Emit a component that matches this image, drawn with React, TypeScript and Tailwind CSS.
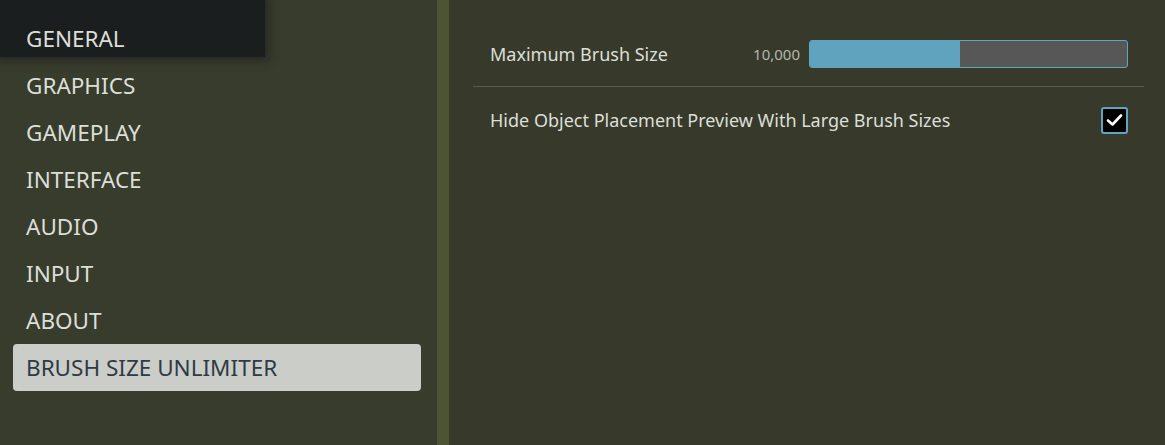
import React from "react";

const items = ["GENERAL", "GRAPHICS", "GAMEPLAY", "INTERFACE", "AUDIO", "INPUT", "ABOUT", "BRUSH SIZE UNLIMITER"];

export default function App() {
  return (
    <div
      className="relative flex h-[445px] w-[1165px] overflow-hidden bg-[#383c2c]"
      style={{ fontFamily: '"Noto Sans", "Liberation Sans", sans-serif' }}
    >
      <div className="pointer-events-none absolute left-0 top-0 h-[57px] w-[265px] bg-[#1b1e1f] shadow-[0_0_8px_4px_rgba(27,30,31,0.6)]" />
      <div className="relative flex w-[437px] flex-col pt-[15px]">
        {items.map((it, i) => {
          const sel = i === items.length - 1;
          return (
            <div
              key={it}
              className={
                "ml-[13px] mr-[16px] flex h-[47px] items-center rounded-[4px] pl-[13px] text-[22.5px] " +
                (sel ? "bg-[#cbcdc8] text-[#2f3a44]" : "text-[#dcdfd8]")
              }
            >
              {it}
            </div>
          );
        })}
      </div>
      <div className="w-[12px] bg-[#4b5433]" />
      <div className="flex flex-1 flex-col bg-[#373a2b] pl-[24px] pr-[21px] pt-[24px]">
        <div className="flex h-[63px] items-center border-b border-[#595d4a] pb-[2px] pl-[17px] pr-[16px]">
          <span className="flex-1 text-[18px] text-[#dcdfd8]">Maximum Brush Size</span>
          <span className="mr-[9px] text-[15px] text-[#b3b6ab]">10,000</span>
          <div className="flex h-[28px] w-[319px] overflow-hidden rounded-[3px] border border-[#5fa5c0] bg-[#575757]">
            <div className="h-full w-[150px] bg-[#5fa3be]" />
          </div>
        </div>
        <div className="flex h-[66px] items-center pl-[17px] pr-[16px]">
          <span className="flex-1 text-[18px] text-[#dcdfd8]">Hide Object Placement Preview With Large Brush Sizes</span>
          <div className="flex h-[27px] w-[27px] items-center justify-center rounded-[3px] border-2 border-[#5fa5c0] bg-black">
            <svg width="17" height="14" viewBox="0 0 17 14">
              <path d="M2 7.5 L6.5 11.5 L15 2.5" fill="none" stroke="white" strokeWidth="2.6" strokeLinecap="round" strokeLinejoin="round" />
            </svg>
          </div>
        </div>
      </div>
    </div>
  );
}
